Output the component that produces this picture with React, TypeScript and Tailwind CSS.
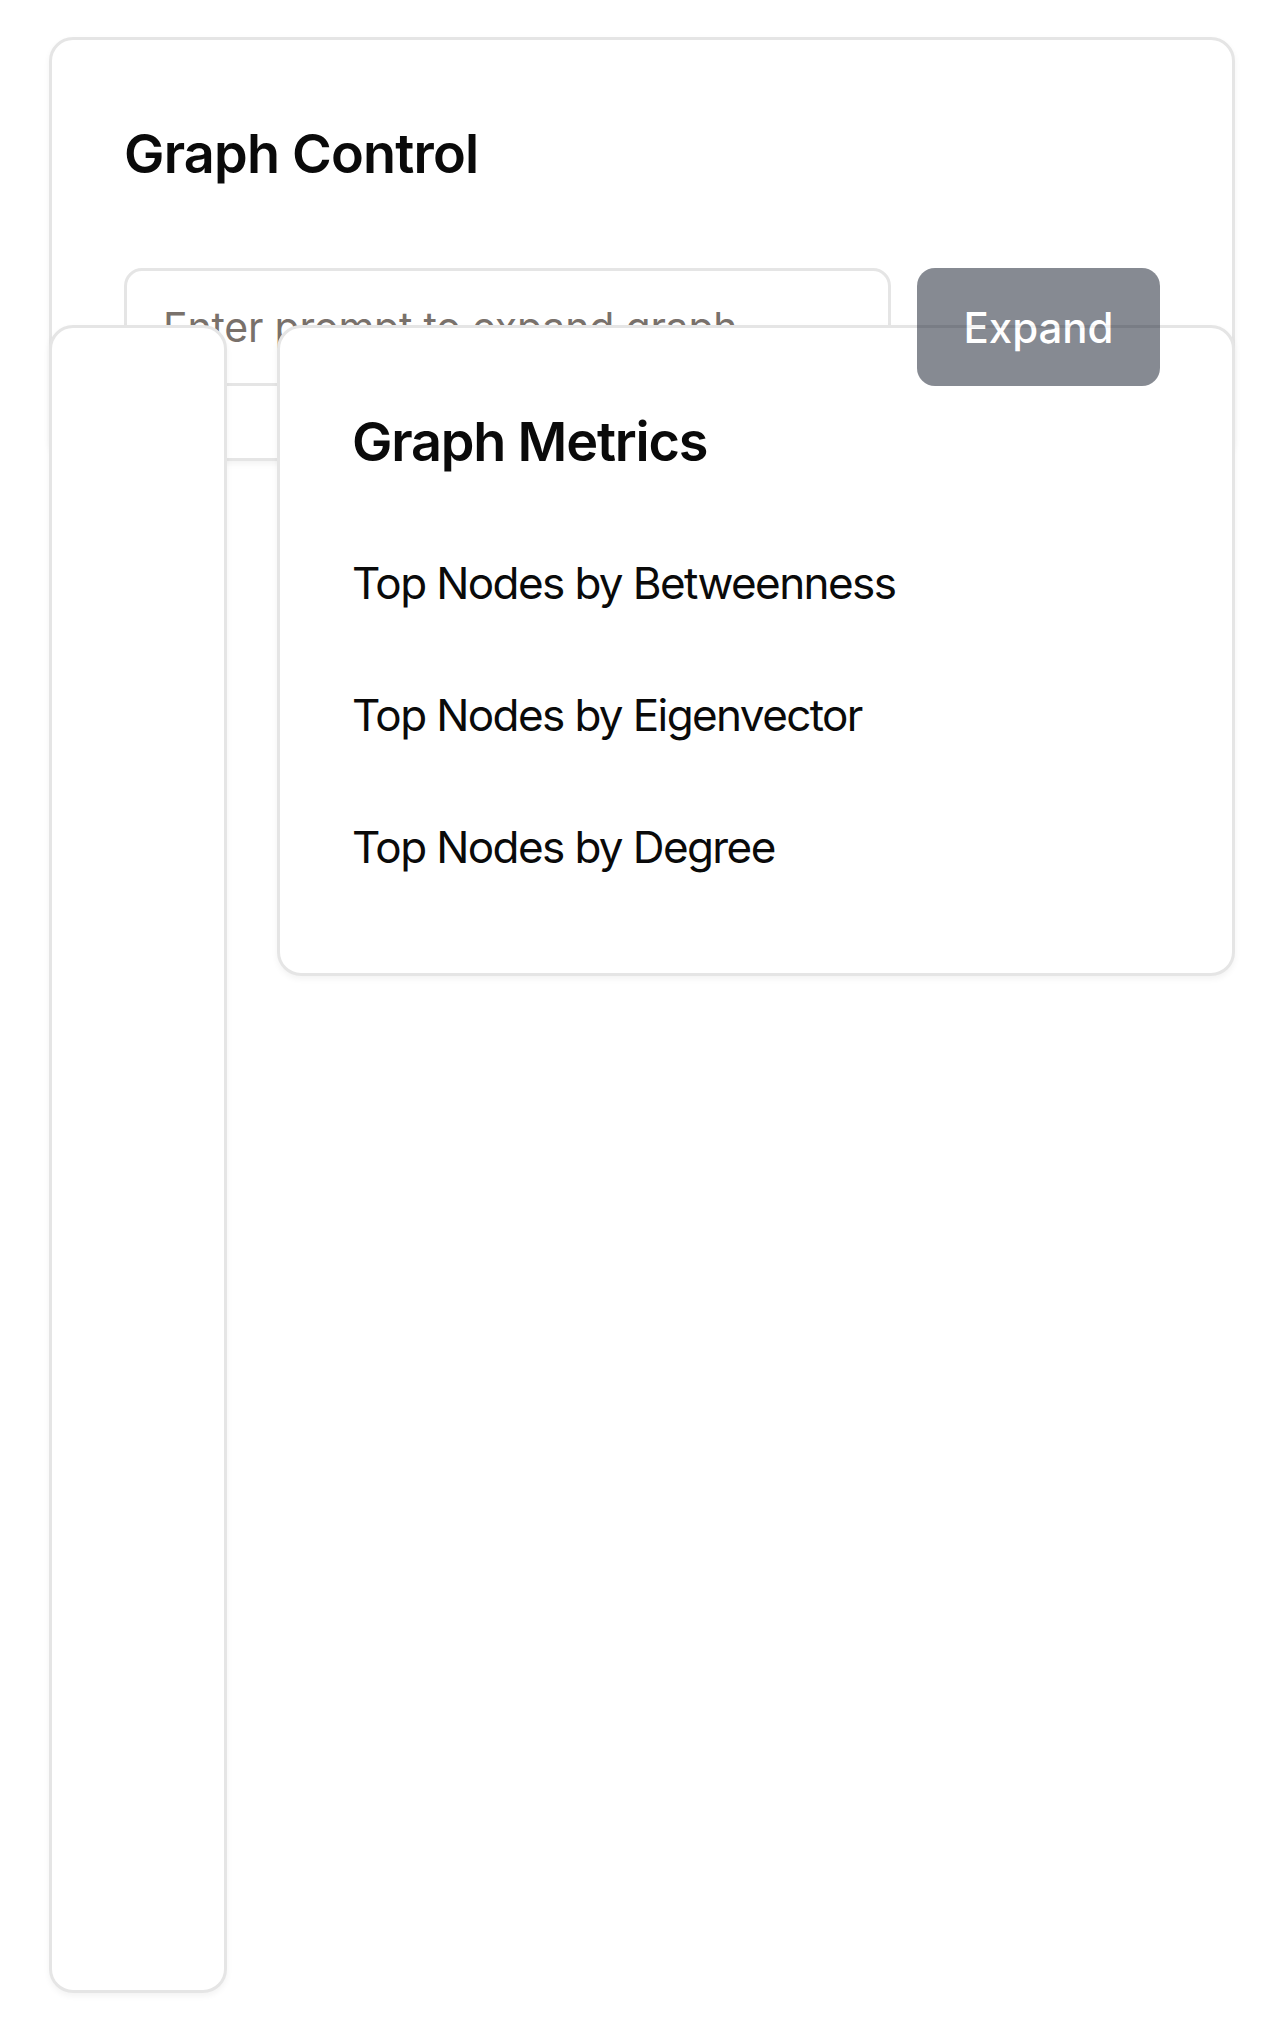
import React from 'react';

const metrics = [
  'Top Nodes by Betweenness',
  'Top Nodes by Eigenvector',
  'Top Nodes by Degree',
];

export default function App() {
  return (
    <div className="min-h-screen bg-white px-[49px] pt-[37px] font-['Inter','Liberation_Sans',sans-serif] text-[#0a0a0a]">
      {/* Graph control card */}
      <div className="rounded-[24px] border-[3px] border-[#e5e5e5] bg-white p-[72px] shadow-[0_3px_6px_rgba(0,0,0,0.05)]">
        <h2 className="mb-[72px] text-[54px] leading-[84px] font-semibold tracking-[-0.8px]">Graph Control</h2>
        <div className="flex gap-[26px]">
          <input
            type="text"
            placeholder="Enter prompt to expand graph"
            className="h-[118px] min-w-0 flex-1 rounded-[18px] border-[3px] border-[#e5e5e5] bg-white px-[36px] text-[41px] tracking-[-0.2px] outline-none placeholder:text-stone-500"
          />
          <button
            disabled
            className="relative z-10 h-[118px] w-[243px] rounded-[18px] bg-gray-900 text-[42px] font-medium text-white opacity-50"
          >
            Expand
          </button>
        </div>
      </div>

      {/* Sidebar + metrics */}
      <div className="-mt-[136px] flex items-start gap-[50px]">
        <aside className="relative h-[1668px] w-[178px] shrink-0 rounded-[24px] border-[3px] border-[#e5e5e5] bg-white shadow-[0_3px_6px_rgba(0,0,0,0.05)]" />

        <section className="relative flex-1 rounded-[24px] border-[3px] border-[#e5e5e5] bg-white px-[72px] pt-[72px] pb-[90px] shadow-[0_3px_6px_rgba(0,0,0,0.05)]">
          <h2 className="mb-[63px] text-[54px] leading-[84px] font-semibold tracking-[-1.2px]">Graph Metrics</h2>
          <div className="flex flex-col gap-[60px]">
            {metrics.map((m) => (
              <div key={m} className="text-[44px] leading-[72px] tracking-[-1.6px]">
                {m}
              </div>
            ))}
          </div>
        </section>
      </div>
    </div>
  );
}
